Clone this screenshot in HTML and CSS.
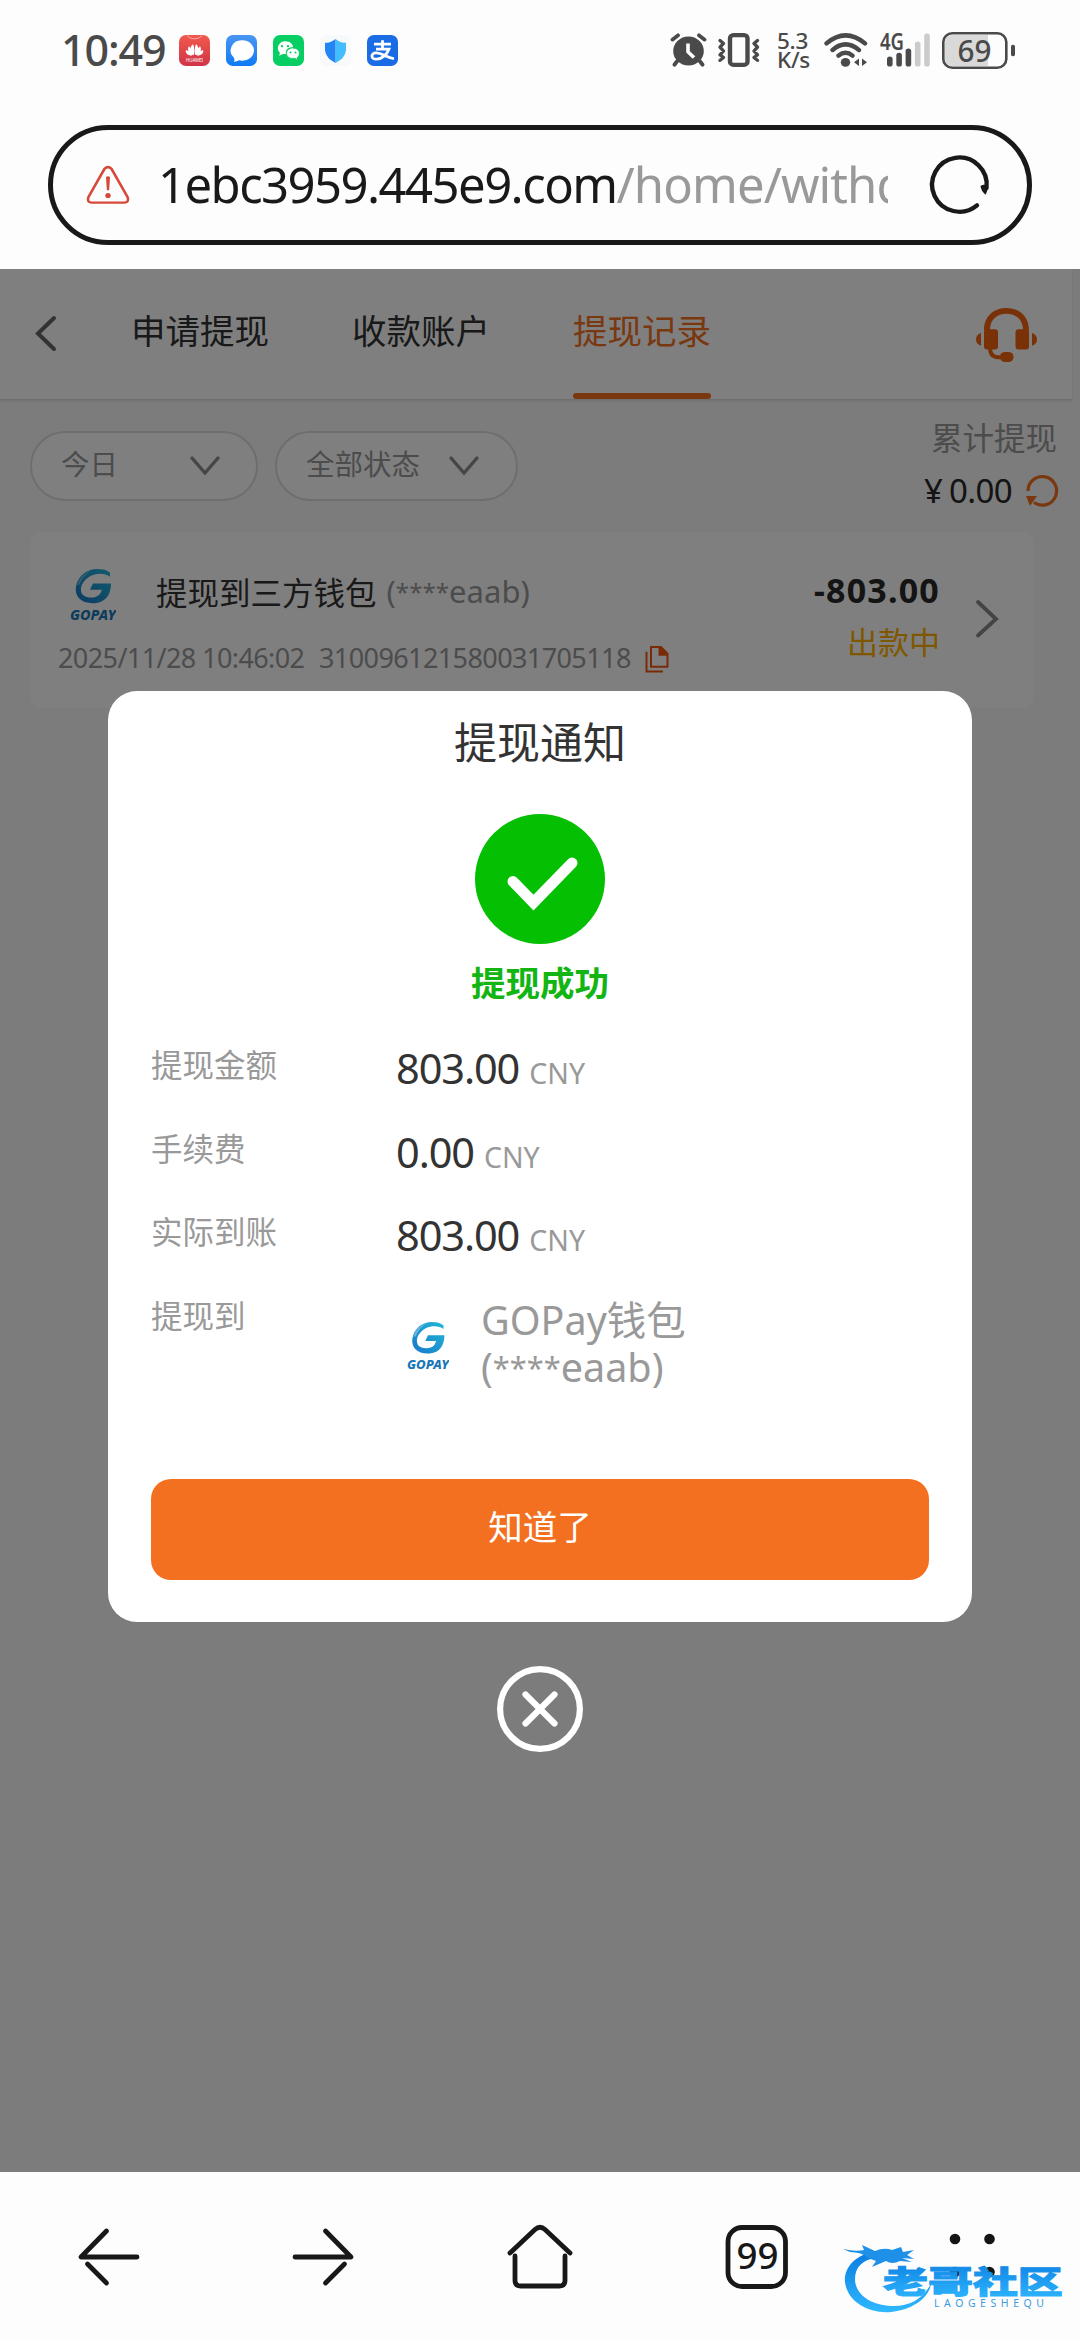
FILE: index.html
```
<!DOCTYPE html>
<html lang="zh-CN">
<head>
<meta charset="utf-8">
<title>提现记录</title>
<link rel="stylesheet" href="styles.css">
</head>
<body>
<svg width="0" height="0" class="defs" aria-hidden="true">
  <defs>
    <linearGradient id="gopayFill" x1="1" y1="0" x2="0" y2="1"><stop offset="0" stop-color="#22b9d8"/><stop offset="1" stop-color="#1877c9"/></linearGradient>
    <linearGradient id="brandFill" x1="0" y1="0" x2="0" y2="1"><stop offset="0" stop-color="#0a7de0"/><stop offset="1" stop-color="#2fb8ff"/></linearGradient>
    <symbol id="gopay" viewBox="0 0 46 54">
      <path d="M40 9C35 5 27 5 21 8C12 13 9 21 12 27C16 32 26 32 30 27L32 22.500H20L23 16H41C41 27 36 35.500 25 36.500C12 37.500 4 30 6 19C8 8 17 1 27 1C33 1 37 2 40 5Z" fill="url(#gopayFill)"/>
      <path d="M7 18C9 10 14 5 21 3C15 7 11 12 10 17Z" fill="#fff" opacity=".35"/>
      <text x="0" y="53.500" textLength="46" lengthAdjust="spacingAndGlyphs" class="gopay-word">GOPAY</text>
    </symbol>
  </defs>
</svg>
<div class="screen">
  <header class="status">
    <span class="clock">10:49</span>
    <div class="notices">
      <svg width="31" height="31" viewBox="0 0 31 32" preserveAspectRatio="none"><defs><linearGradient id="r" x1="0" y1="0" x2="0" y2="1"><stop offset="0" stop-color="#f2594c"/><stop offset="1" stop-color="#cf3548"/></linearGradient></defs><rect width="31" height="32" rx="7" fill="url(#r)"/><path d="M8 1q7.500 6 15 0" fill="none" stroke="#fff" stroke-opacity=".5"/><g fill="#fff"><path d="M15 21C11 17 11 11 14 9.500C15.500 12 15.500 17 15 21ZM16 21C20 17 20 11 17 9.500C15.500 12 15.500 17 16 21ZM14 21C9 19 8 14 10 11.500C12 13 14 17 14 21ZM17 21C22 19 23 14 21 11.500C19 13 17 17 17 21ZM13 21.500C8 21 6 18 7 15.500C10 16.500 12 19 13 21.500ZM18 21.500C23 21 25 18 24 15.500C21 16.500 19 19 18 21.500Z"/><text x="7" y="28" textLength="17" lengthAdjust="spacingAndGlyphs" font-size="5">HUAWEI</text></g></svg>
      <svg width="31" height="31" viewBox="0 0 31 32" preserveAspectRatio="none"><defs><linearGradient id="b" x1="0" y1="0" x2="0" y2="1"><stop offset="0" stop-color="#4a95f3"/><stop offset="1" stop-color="#0f7af5"/></linearGradient></defs><rect width="31" height="32" rx="7" fill="url(#b)"/><path d="M16 5.500a11.500 10.500 0 1 1-3 20.500q-2 1.500-5 1.500q1-2 0-4A11 10.500 0 0 1 16 5.500Z" fill="#fff"/></svg>
      <svg width="31" height="31" viewBox="0 0 31 32" preserveAspectRatio="none"><rect width="31" height="32" rx="7" fill="#07ce62"/><path d="M12 6.500c5 0 8 3 8 6.200h-1c-4 0-7 3-6 6.800h-3l-4 2 1-3C2.500 14.500 5.500 6.500 12 6.500Z" fill="#fff"/><path d="M19.500 13.500c8 0 8.500 8 4.500 10l.5 2-3-1.400c-5 .8-8-2-8-5.100s3-5.500 6-5.500Z" fill="#fff" stroke="#07ce62" stroke-width=".8"/><g fill="#07ce62"><circle cx="9" cy="11.500" r="1.200"/><circle cx="15" cy="11.500" r="1.200"/><circle cx="17.500" cy="18" r="1"/><circle cx="22.500" cy="18" r="1"/></g></svg>
      <svg width="31" height="31" viewBox="0 0 31 32" preserveAspectRatio="none"><rect width="31" height="32" rx="7" fill="#f8f9fb"/><path d="M15.500 4q5 4 10.500 4v8q-1 8-10.500 13Z" fill="#44bdff"/><path d="M15.500 4q-5 4-10.500 4v8q1 8 10.500 13Z" fill="#2384f3"/></svg>
      <svg width="31" height="31" viewBox="0 0 31 32" preserveAspectRatio="none"><rect width="31" height="32" rx="7" fill="#1a6be4"/><path d="M7 9.500H24M15.500 5.500V14M9 14.500H22C20 20 15 25 9.500 25C3.500 25 3.500 18.500 9 18.500C15 18.500 19 23 27 24.500" fill="none" stroke="#fff" stroke-width="2.800"/></svg>
    </div>
    <div class="indicators">
      <svg width="37" height="34" viewBox="0 0 37 36" preserveAspectRatio="none" fill="none" stroke="#4a4a4a" stroke-linecap="round"><circle cx="18.500" cy="19" r="15.300" fill="#4a4a4a" stroke="none"/><path d="M2.500 7L8 2.500M34.500 7L29 2.500M7 30L4.500 33.500M30 30L32.500 33.500" stroke-width="4"/><path d="M18 11V20L24 26" stroke="#fff" stroke-width="3.600" stroke-linecap="butt"/></svg>
      <svg width="42" height="34" viewBox="0 0 42 36" preserveAspectRatio="none" fill="none" stroke="#4a4a4a" stroke-width="3.400" stroke-linejoin="round" stroke-linecap="round"><rect x="12" y="2.200" width="17.500" height="31.500" rx="3.500" stroke-width="4.400"/><path d="M2 8L5.500 11L2 15L5.500 19L2 23L5.500 26L2 29M39.500 8L36 11L39.500 15L36 19L39.500 23L36 26L39.500 29"/></svg>
      <div class="speed"><span>5.3</span><span>K/s</span></div>
      <svg width="44" height="35" viewBox="0 0 44 37" preserveAspectRatio="none" fill="none" stroke="#4a4a4a" stroke-width="4.600" stroke-linecap="round"><path d="M2.500 11Q21.500-6 41 11M8.500 18Q21.500 6 35 18M14.500 24Q21.500 18 28.500 24"/><circle cx="21.500" cy="31" r="4.700" fill="#4a4a4a" stroke="none"/><path d="M35 27V35L30 31ZM38 27V35L43 31Z" fill="#4a4a4a" stroke="none"/></svg>
      <svg width="50" height="34" viewBox="0 0 50 36" preserveAspectRatio="none"><g fill="#4a4a4a"><text x="0" y="17.500" textLength="24" lengthAdjust="spacingAndGlyphs" class="net">4G</text><rect x="7" y="25" width="5.600" height="10.500" rx="2.800"/><rect x="16.300" y="21" width="5.600" height="14.500" rx="2.800"/><rect x="25.600" y="16.500" width="5.600" height="19" rx="2.800"/></g><g fill="#cbcbcb"><rect x="34.900" y="9" width="5.600" height="26.500" rx="2.800"/><rect x="44.200" y="0.500" width="5.600" height="35" rx="2.800"/></g></svg>
      <svg width="74" height="37" viewBox="0 0 74 38" preserveAspectRatio="none"><path d="M3 11Q3 3 11 3H46V35H11Q3 35 3 27Z" fill="#d9d9d9"/><rect x="1.300" y="1.300" width="63" height="35.400" rx="9" fill="none" stroke="#4a4a4a" stroke-width="2.600"/><rect x="69" y="13" width="4" height="12" rx="1.800" fill="#4a4a4a"/><text x="15.500" y="30.500" textLength="34" lengthAdjust="spacingAndGlyphs" class="batt">69</text></svg>
    </div>
  </header>

  <div class="address">
    <svg width="44" height="40" viewBox="0 0 44 42" preserveAspectRatio="none" fill="none" stroke="#d6493a"><path d="M18.500 4Q22 .5 25.500 4L41.500 33.500Q43.500 39 38.500 39.500H5.500Q.5 39 2.500 33.500Z" stroke-width="2.600"/><path d="M20 12.500q2-1.500 4 0l-.8 14h-2.400Z" fill="#d6493a" stroke="none"/><circle cx="22" cy="32" r="2.700" fill="#d6493a" stroke="none"/></svg>
    <div class="url"><span class="host">1ebc3959.445e9.com</span><span class="path">/home/withdraw</span></div>
    <svg width="60" height="60" viewBox="0 0 60 62" preserveAspectRatio="none" fill="none" stroke="#191919" stroke-width="4.400" stroke-linecap="round"><path d="M47 52A27.300 28 0 1 1 56.500 34"/><path d="M50.500 32Q54 29.500 57 32Q58.500 36 55.500 41Q51 37 50.500 32Z" fill="#191919" stroke="none"/></svg>
  </div>

  <main class="page">
    <nav class="tabs">
      <svg class="back" width="22" height="38" viewBox="0 0 22 38"><path d="M19 3L3 18.500L19 34" fill="none" stroke="#646464" stroke-width="4" stroke-linecap="round"/></svg>
      <div class="tablist"><span class="tab">申请提现</span><span class="tab">收款账户</span><span class="tab active">提现记录</span></div>
      <svg class="support" width="61" height="56" viewBox="0 0 61 58" preserveAspectRatio="none" fill="#f2650f"><path d="M8 23C8 8 18 0 30.500 0S53 8 53 23H47C47 12 40 6 30.500 6S14 12 14 23Z"/><rect x="8" y="22" width="14" height="21" rx="3"/><rect x="39.500" y="22" width="13.500" height="21" rx="3"/><path d="M5 26V39Q0 37 0 32.500T5 26ZM56 26V39Q61 37 61 32.500T56 26Z"/><path d="M14 41Q14 51 22 51H28" fill="none" stroke="#f2650f" stroke-width="4"/><rect x="24" y="45.500" width="13.500" height="10.500" rx="5"/></svg>
    </nav>
    <section class="filters">
      <div class="pill today"><span>今日</span><svg width="30" height="20" viewBox="0 0 30 20"><path d="M2 2L15 17L28 2" class="chev"/></svg></div>
      <div class="pill state"><span>全部状态</span><svg width="30" height="20" viewBox="0 0 30 20"><path d="M2 2L15 17L28 2" class="chev"/></svg></div>
      <div class="total">
        <span class="total-label">累计提现</span>
        <div class="total-row"><span class="total-sum"><span class="yen">¥</span>0.00</span>
        <svg width="34" height="34" viewBox="0 0 34 34"><path d="M3 17A14.300 14.300 0 1 1 9 28.500" fill="none" stroke="#f37021" stroke-width="3.200"/><path d="M1 22H12L5 32Z" fill="#f37021"/></svg></div>
      </div>
    </section>
    <article class="record">
      <div class="record-main">
        <div class="record-title"><svg class="logo" width="46" height="52" viewBox="0 0 46 54" preserveAspectRatio="none"><use href="#gopay" width="46" height="54"/></svg><span class="name">提现到三方钱包</span><span class="acct">(<span class="stars">****</span>eaab)</span></div>
        <div class="record-meta"><span class="date">2025/11/28 10:46:02</span><span class="serial">310096121580031705118</span><svg width="24" height="27" viewBox="0 0 24 28" preserveAspectRatio="none" fill="none" stroke="#f2570f" stroke-width="2"><path d="M1.500 6V26.500H18M6 1H16L22.500 8V21.500H6Z"/><path d="M13.500 1V10H23V8L16 1Z" fill="#f2570f" stroke="none"/></svg></div>
      </div>
      <div class="record-side"><span class="amount">-803.00</span><span class="pending">出款中</span></div>
      <svg class="more" width="24" height="40" viewBox="0 0 24 40"><path d="M3 3L21 20L3 36.500" fill="none" stroke="#888" stroke-width="3.800" stroke-linecap="round"/></svg>
    </article>
    <div class="overlay">
      <div class="dialog">
        <h1 class="dialog-title">提现通知</h1>
        <svg class="success" width="130" height="130" viewBox="0 0 130 130"><circle cx="65" cy="65" r="65" fill="#05bf02"/><path d="M38 67.500L58.500 88.500L97 49" fill="none" stroke="#fff" stroke-width="11" stroke-linecap="round"/></svg>
        <p class="result">提现成功</p>
        <dl class="details">
          <div class="row"><dt>提现金额</dt><dd><span class="num">803.00</span><span class="cur">CNY</span></dd></div>
          <div class="row"><dt>手续费</dt><dd><span class="num">0.00</span><span class="cur">CNY</span></dd></div>
          <div class="row"><dt>实际到账</dt><dd><span class="num">803.00</span><span class="cur">CNY</span></dd></div>
          <div class="row wallet"><dt>提现到</dt><dd><svg class="logo" width="42" height="48" viewBox="0 0 46 54" preserveAspectRatio="none"><use href="#gopay" width="46" height="54"/></svg><span class="wallet-name">GOPay钱包<br><span class="wallet-acct">(<span class="stars">****</span>eaab)</span></span></dd></div>
        </dl>
        <button class="ok">知道了</button>
      </div>
      <svg class="close" width="86" height="86" viewBox="0 0 86 86" fill="none" stroke="#fff" stroke-width="6.200" stroke-linecap="round"><circle cx="43" cy="43" r="39.900"/><path d="M28.500 28.500L57.500 57.500M57.500 28.500L28.500 57.500"/></svg>
    </div>
  </main>

  <footer class="toolbar">
    <svg width="64" height="64" viewBox="0 0 64 64" class="line"><path d="M30.500 6L5 32H61M11.500 39L30.500 58"/></svg>
    <svg width="64" height="64" viewBox="0 0 64 64" class="line"><path d="M33.500 6L59 32H3M52.500 39L33.500 58"/></svg>
    <svg width="66" height="64" viewBox="0 0 66 64" class="line"><path d="M3 28L28 4.500Q33 0 38 4.500L63 28"/><path d="M8 31V55.500Q8 61 13.500 61H52.500Q58 61 58 55.500V31"/></svg>
    <svg width="64" height="64" viewBox="0 0 64 64" class="line"><rect x="3" y="2.500" width="57.500" height="59" rx="14"/><text x="11.500" y="43.500" textLength="42" lengthAdjust="spacingAndGlyphs" class="count">99</text></svg>
    <svg width="64" height="64" viewBox="0 0 64 64" fill="#151515"><circle cx="15" cy="14" r="5.300"/><circle cx="49.500" cy="14" r="5.300"/><circle cx="15" cy="47" r="5.300"/><circle cx="49.500" cy="47" r="5.300"/></svg>
    <svg class="brand" width="224" height="76" viewBox="0 0 224 76">
      <path d="M27 9C9 14 2 27 3 38C5 57 26 70 49 68C70 66 87 54 89 40C80 56 66 63 49 62C28 61 13 50 13 35C13 23 21 15 35 14Z" fill="url(#brandFill)"/>
      <path d="M1 5Q14 8 22 6L20 1L33 7Q42 3 50 6L59 3L61 8L72 6L65 11L72 15L60 14L70 18L58 17Q50 21 44 17L30 23L34 17L26 14Q20 8 8 8Z" fill="#1f90e8"/>
      <g transform="translate(41 49) scale(1.450 1)"><text class="brand-name">老哥社区</text></g>
      <text x="92" y="62.500" textLength="110" class="brand-latin">LAOGESHEQU</text>
    </svg>
  </footer>
</div>
</body>
</html>
```
FILE: styles.css
```
* { box-sizing: border-box; }
body { margin: 0; background: #fff; font-family: "Noto Sans", "Noto Sans CJK SC", sans-serif; }
svg { display: block; flex: none; overflow: visible; }
h1, p, dl, dd { margin: 0; }
.defs { position: absolute; }
.screen { width: 1080px; height: 2340px; display: flex; flex-direction: column; overflow: hidden; background: #fdfdfd; }

.status { height: 125px; flex: none; padding: 31px 64px 0 61px; display: flex; align-items: flex-start; color: #4a4a4a; }
.clock { width: 118px; font-size: 43px; font-weight: 500; line-height: 38px; letter-spacing: -1.1px; white-space: nowrap; }
.notices { display: flex; gap: 16px; padding-top: 4px; }
.indicators { height: 38px; margin-left: auto; display: flex; align-items: center; }
.indicators > svg:nth-child(2) { margin-left: 11px; }
.speed { margin-left: 17px; width: 47px; display: flex; flex-direction: column; font-size: 22.5px; font-weight: 500; line-height: 19px; letter-spacing: -.3px; }
.indicators > svg:nth-child(5) { margin-left: 12px; }
.indicators > svg:nth-child(6) { margin-left: 12px; }
.net { font-size: 24px; font-weight: 600; }
.batt { font-size: 32px; font-weight: 500; fill: #4a4a4a; }

.address { margin: 0 48px 24px; height: 120px; flex: none; border: 5px solid #191919; border-radius: 60px; display: flex; align-items: center; padding: 0 37px 0 33px; }
.url { width: 731px; margin: -2px 42px 0 28px; overflow: hidden; white-space: nowrap; font-size: 49px; line-height: 70px; }
.host { color: #191919; letter-spacing: -1.55px; }
.path { color: #999; letter-spacing: -.9px; }

.page { position: relative; height: 1903px; flex: none; background: #f8f8f8; }
.tabs { width: 1072px; height: 130px; padding: 0 35px 0 35px; display: flex; background: #fff; box-shadow: 0 2px 2px #dadada; }
.back { margin-top: 46px; }
.tablist { display: flex; gap: 83px; margin-left: 74px; }
.tab { width: 138px; padding-top: 37px; height: 130px; display: flex; flex-direction: column; justify-content: space-between; font-size: 34.500px; line-height: 50px; color: #333; white-space: nowrap; }
.active { color: #f37021; }
.active::after { content: ""; height: 6px; border-radius: 3px; background: #f37021; }
.support { margin: 39px 0 0 auto; }
.filters { height: 133px; padding: 32px 23px 0 30px; display: flex; align-items: flex-start; }
.pill { height: 70px; border: 2px solid #dcdcdc; border-radius: 35px; background: #fff; display: flex; align-items: center; justify-content: space-between; color: #999; font-size: 28.500px; line-height: 40px; padding-left: 29px; white-space: nowrap; }
.today { width: 228px; padding-right: 36px; }
.state { width: 243px; margin-left: 17px; padding-right: 37px; }
.pill span { margin-top: -4px; }
.chev { fill: none; stroke: #8c8c8c; stroke-width: 3.400; stroke-linecap: round; }
.total { margin: -14px 0 0 auto; display: flex; flex-direction: column; align-items: flex-end; }
.total-label { font-size: 31.500px; line-height: 42px; color: #999; }
.total-row { display: flex; align-items: center; gap: 13px; margin-top: 13px; margin-right: -2px; }
.total-sum { font-size: 33px; line-height: 38px; letter-spacing: -.6px; color: #292929; }
.yen { display: inline-block; width: 25px; }

.record { margin-left: 30px; width: 1004px; height: 176px; border-radius: 12px; background: #fff; display: flex; padding: 0 35px 0 28px; }
.record-main { flex: 1; }
.record-title { display: flex; align-items: center; padding: 36px 0 0 12px; height: 88px; white-space: nowrap; }
.gopay-word { font-size: 14px; font-weight: 800; font-style: italic; fill: #1877b8; }
.name { margin: -6px 0 0 40px; font-size: 31.500px; color: #333; }
.acct { margin: -6px 0 0 10px; font-size: 31px; line-height: 42px; color: #999; }
.stars { font-size: .78em; line-height: 1; vertical-align: .1em; }
.record-meta { display: flex; align-items: center; height: 40px; margin-top: 17px; font-size: 27px; letter-spacing: -.6px; color: #999; white-space: nowrap; }
.date { width: 261px; }
.serial { width: 326px; }
.record-meta svg { margin-top: 4px; }
.record-side { display: flex; flex-direction: column; align-items: flex-end; padding-top: 38px; }
.amount { font-size: 34px; font-weight: 700; line-height: 40px; letter-spacing: 1.2px; color: #292929; }
.pending { margin-top: 12px; font-size: 31px; line-height: 40px; color: #ffae00; }
.more { margin: 67px 0 0 35px; }

.overlay { position: absolute; inset: 0; background: rgba(0, 0, 0, .5); padding-top: 422px; display: flex; flex-direction: column; align-items: center; }
.dialog { width: 864px; height: 931px; border-radius: 29px; background: #fff; padding: 22px 43px 42px; display: flex; flex-direction: column; align-items: center; }
.dialog-title { font-size: 43px; font-weight: 400; line-height: 60px; color: #333; }
.success { margin-top: 41px; }
.result { margin-top: 14px; font-size: 34.500px; font-weight: 700; line-height: 50px; color: #12b512; }
.details { width: 100%; margin-top: 34px; flex: 1; }
.row { display: flex; height: 83.500px; }
dt { width: 245px; font-size: 31.500px; line-height: 46px; color: #999; }
dd { display: flex; align-items: baseline; line-height: 56px; height: 56px; margin-top: -2px; }
.num { font-size: 41.500px; letter-spacing: -1.100px; color: #333; }
.cur { margin-left: 10px; font-size: 28.500px; color: #999; }
.wallet dd { align-items: flex-start; margin-top: 0; }
.wallet .logo { margin: 28px 0 0 11px; }
.wallet-name { margin: 4px 0 0 32px; font-size: 39.500px; line-height: 47px; color: #999; }
.ok { width: 778px; height: 101px; flex: none; padding: 0 0 9px; border: 0; border-radius: 20px; background: #f37021; color: #fff; font: 34.500px "Noto Sans", "Noto Sans CJK SC", sans-serif; }
.close { margin-top: 44px; }

.toolbar { position: relative; flex: 1; display: flex; justify-content: space-between; padding: 53px 76px 0 76px; background: #fdfdfd; }
.line { fill: none; stroke: #181818; stroke-width: 4.800; stroke-linecap: round; stroke-linejoin: round; }
.count { font-size: 37px; font-weight: 500; fill: #181818; stroke: none; }
.brand { position: absolute; left: 842px; top: 72px; }
.brand-name { font-family: "Noto Sans CJK SC", sans-serif; font-size: 31px; font-weight: 900; fill: url(#brandFill); stroke: url(#brandFill); stroke-width: 1; }
.brand-latin { font-size: 10.500px; fill: #3d9cdf; }
```
